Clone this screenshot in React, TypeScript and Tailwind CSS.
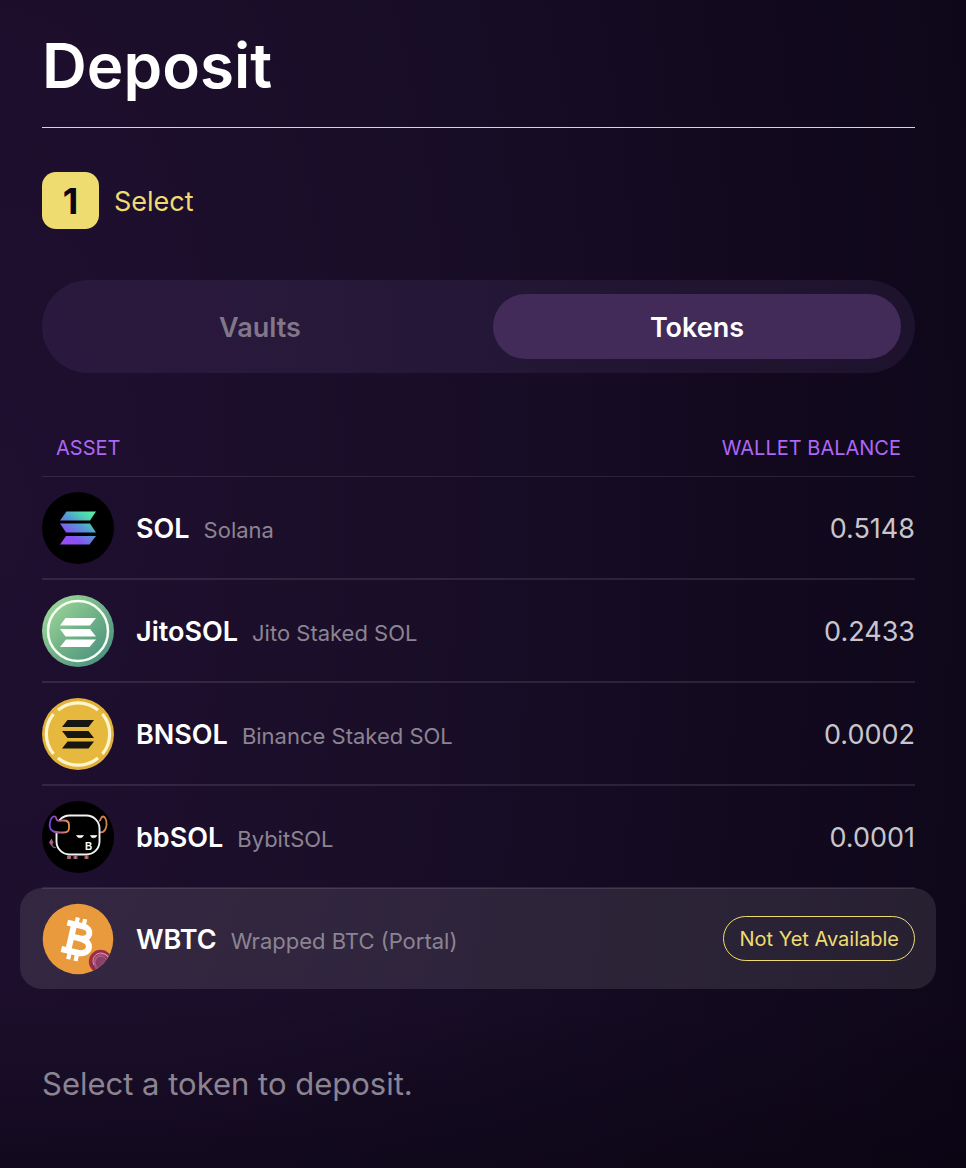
import React from "react";

function SolIcon() {
  return (
    <svg viewBox="0 0 72 72" className="size-[72px] shrink-0" aria-hidden="true">
      <defs>
        <linearGradient id="sol" gradientUnits="userSpaceOnUse" x1="24" y1="54" x2="50" y2="18">
          <stop offset="0" stopColor="#9a4cf5" />
          <stop offset="0.25" stopColor="#8752f3" />
          <stop offset="0.55" stopColor="#5497d5" />
          <stop offset="0.8" stopColor="#4fd5b0" />
          <stop offset="1" stopColor="#5df0a0" />
        </linearGradient>
      </defs>
      <circle cx="36" cy="36" r="36" fill="#000" />
      <path d="M24.5 19.5H54L48 28.5H18Z M18 31.5H48L54 40.5H24Z M24 44H54L47.5 52.5H18Z" fill="url(#sol)" />
    </svg>
  );
}

function JitoIcon() {
  return (
    <svg viewBox="0 0 72 72" className="size-[72px] shrink-0" aria-hidden="true">
      <defs>
        <linearGradient id="jito" x1="0.1" y1="0.1" x2="0.9" y2="0.9">
          <stop offset="0" stopColor="#9ed69a" />
          <stop offset="0.5" stopColor="#6fb287" />
          <stop offset="1" stopColor="#4b8f80" />
        </linearGradient>
      </defs>
      <circle cx="36" cy="36" r="36" fill="url(#jito)" />
      <circle cx="36" cy="36" r="30" fill="none" stroke="#f7fff2" strokeWidth="2.5" />
      <path d="M23.5 23H54L48 30.5H18Z M18 34H48L54 41.5H23.5Z M24 44.5H54L47.5 52H18Z" fill="#fff" />
    </svg>
  );
}

function BnIcon() {
  return (
    <svg viewBox="0 0 72 72" className="size-[72px] shrink-0" aria-hidden="true">
      <circle cx="36" cy="36" r="36" fill="#e2b13b" />
      <circle cx="36" cy="36" r="33" fill="#e6b93e" />
      <path
        d="M16 12A31.5 31.5 0 0 1 56 12 M60.5 16A31.5 31.5 0 0 1 60.5 56 M56 60A31.5 31.5 0 0 1 16 60 M11.5 56A31.5 31.5 0 0 1 11.5 16"
        fill="none"
        stroke="#fff6cf"
        strokeWidth="3.2"
      />
      <path d="M25.5 22H52L46.5 29H20Z M20 33H46.5L52 40H25.5Z M25.5 43.5H52L46.5 50.5H20Z" fill="#171612" />
    </svg>
  );
}

function BbIcon() {
  return (
    <svg viewBox="0 0 72 72" className="size-[72px] shrink-0" aria-hidden="true">
      <defs>
        <linearGradient id="horn" x1="0" y1="0.5" x2="1" y2="0.5">
          <stop offset="0" stopColor="#7141e8" />
          <stop offset="0.5" stopColor="#b0628f" />
          <stop offset="1" stopColor="#e8964a" />
        </linearGradient>
      </defs>
      <circle cx="36" cy="36" r="36" fill="#000" />
      <path d="M57 20C60 19 58 16 61 15.5C64 16 66 23 63.5 28C62 31 60 32 57 31" fill="none" stroke="#d08049" strokeWidth="1.8" />
      <rect x="14.5" y="14.5" width="43" height="39" rx="13" fill="#000" stroke="#f4f3f4" strokeWidth="1.9" />
      <path
        d="M13 15.5C8.5 14 5.5 26 10 29.5C12 31.5 15 31.5 22 31.5Q27 31.5 27 27V24Q27 19.5 22 19.5C19 19.5 16 20.5 15 19C14 18 14.5 16 13 15.5Z"
        fill="#000"
        stroke="url(#horn)"
        strokeWidth="1.8"
      />
      <path d="M34.5 34.5H41.5Q40.5 36.8 38 36.8T34.5 34.5Z M48.5 34.5H55Q54 36.8 51.5 36.8T48.5 34.5Z" fill="#fff" stroke="#fff" strokeWidth="0.6" />
      <path d="M14 46.5Q10.5 47 9.5 43" fill="none" stroke="#666" strokeWidth="1.2" />
      <path d="M9.5 37.5L11.5 41.5L9.5 45L7 41.5Z" fill="#ae5a88" />
      <path d="M25 54.5H29V58H25Z M31.5 54.5H35.5V58H31.5Z M42.5 54.5H46.5V58H42.5Z" fill="#97557a" />
      <path d="M27 54V58 M33.5 54V58 M44.5 54V58" stroke="#c78355" strokeWidth="1" />
      <text x="43" y="49" fill="#fff" className="font-['Liberation_Sans'] text-[10px] font-bold">
        B
      </text>
    </svg>
  );
}

function BtcIcon() {
  return (
    <svg viewBox="0 0 72 72" className="size-[72px] shrink-0" aria-hidden="true">
      <defs>
        <clipPath id="coin">
          <circle cx="36" cy="36" r="35.3" />
        </clipPath>
        <radialGradient id="portal" cx="0.6" cy="0.55" r="0.6">
          <stop offset="0" stopColor="#8b4774" />
          <stop offset="0.45" stopColor="#8c3a60" />
          <stop offset="0.6" stopColor="#b0587c" />
          <stop offset="0.72" stopColor="#8f2744" />
          <stop offset="1" stopColor="#ad2f48" />
        </radialGradient>
      </defs>
      <circle cx="36" cy="36" r="35.3" fill="#e99a3d" />
      <g transform="rotate(13 36 36)" fill="none" stroke="#fff">
        <path d="M31 15V22 M38.5 15V22 M31 50V58 M38.5 50V58" strokeWidth="4.2" />
        <path d="M22 22.5H38C48.5 22.5 48.5 35 38 35H29 M38 35C52 35 52 49.5 38.5 49.5H22 M29 22V50" strokeWidth="6" />
      </g>
      <g clipPath="url(#coin)">
        <circle cx="58.5" cy="58.5" r="11.7" fill="url(#portal)" />
        <path d="M52 62A8 8 0 0 1 66 54" fill="none" stroke="#c9a0bd" strokeWidth="1" />
        <path d="M54 63A6 6 0 0 1 64 56" fill="none" stroke="#a7648d" strokeWidth="1" />
        <path d="M69 55L65 60L60 66L62 72L72 67Z" fill="#352541" />
      </g>
    </svg>
  );
}

type Token = { symbol: string; name: string; balance: string; icon: React.ReactNode };

const tokens: Token[] = [
  { symbol: "SOL", name: "Solana", balance: "0.5148", icon: <SolIcon /> },
  { symbol: "JitoSOL", name: "Jito Staked SOL", balance: "0.2433", icon: <JitoIcon /> },
  { symbol: "BNSOL", name: "Binance Staked SOL", balance: "0.0002", icon: <BnIcon /> },
  { symbol: "bbSOL", name: "BybitSOL", balance: "0.0001", icon: <BbIcon /> },
];

function Asset({ icon, symbol, name }: { icon: React.ReactNode; symbol: string; name: string }) {
  return (
    <div className="flex items-center gap-[22px]">
      {icon}
      <div className="flex items-baseline gap-[14px] pt-1">
        <span className="text-[27px] leading-9 font-semibold text-white">{symbol}</span>
        <span className="text-[22px] leading-9 text-[#8b8492]">{name}</span>
      </div>
    </div>
  );
}

export default function App() {
  return (
    <main className="min-h-screen bg-[linear-gradient(to_bottom,transparent_86%,rgb(5_2_12/0.4)_100%),radial-gradient(110%_200%_at_0%_44%,#1f0f30_0%,#1b0e2a_30%,#160c24_52%,#0f071a_90%,#0c0516_100%)] pt-[34px] pr-[51px] pb-16 pl-[42px] font-[Inter,'Liberation_Sans',sans-serif]">
      <h1 className="border-b border-[#efdc70] pb-[29px] text-[62px] leading-[64px] font-semibold text-white">Deposit</h1>

      <div className="mt-11 flex items-center gap-[15px]">
        <span className="flex size-[57px] items-center justify-center rounded-[14px] bg-[#efdc70] text-[36px] font-bold text-[#0c0516]">1</span>
        <h2 className="pt-1 text-[27px] text-[#efdc70]">Select</h2>
      </div>

      <div role="tablist" className="mt-[51px] grid h-[93px] grid-cols-2 gap-[29px] rounded-full bg-[#a078d0]/10 p-[14px]">
        <button type="button" role="tab" aria-selected="false" className="rounded-full pt-[3px] text-[27px] font-semibold text-[#81778a]">
          Vaults
        </button>
        <button type="button" role="tab" aria-selected="true" className="rounded-full bg-[#422b59] pt-[3px] text-[27px] font-semibold text-white">
          Tokens
        </button>
      </div>

      <table className="mt-[58px] w-full border-collapse">
        <thead>
          <tr className="h-[45px] border-b border-white/10 text-[20px] leading-8 text-[#ad66f5]">
            <th className="pb-[10px] pl-[14px] text-left font-normal">ASSET</th>
            <th className="pr-[14px] pb-[10px] text-right font-normal">WALLET BALANCE</th>
          </tr>
        </thead>
        <tbody>
          {tokens.map((token) => (
            <tr key={token.symbol} className="border-b-2 border-white/10">
              <td className="pt-[15px] pb-[14px]">
                <Asset {...token} />
              </td>
              <td className="pt-1 text-right text-[27px] text-[#c9c5cc]">{token.balance}</td>
            </tr>
          ))}
          <tr className="relative">
            <td className="py-[14px] before:absolute before:inset-y-0 before:-right-[21px] before:-left-[22px] before:rounded-[22px] before:bg-white/10">
              <div className="relative">
                <Asset icon={<BtcIcon />} symbol="WBTC" name="Wrapped BTC (Portal)" />
              </div>
            </td>
            <td className="text-right">
              <span className="relative inline-flex h-[45px] items-center rounded-full border border-[#efdc70] px-[15px] align-middle text-[20px] text-[#efdc70]">
                Not Yet Available
              </span>
            </td>
          </tr>
        </tbody>
      </table>

      <p className="mt-[75px] text-[31px] leading-10 text-[#8b8492]">Select a token to deposit.</p>
    </main>
  );
}
